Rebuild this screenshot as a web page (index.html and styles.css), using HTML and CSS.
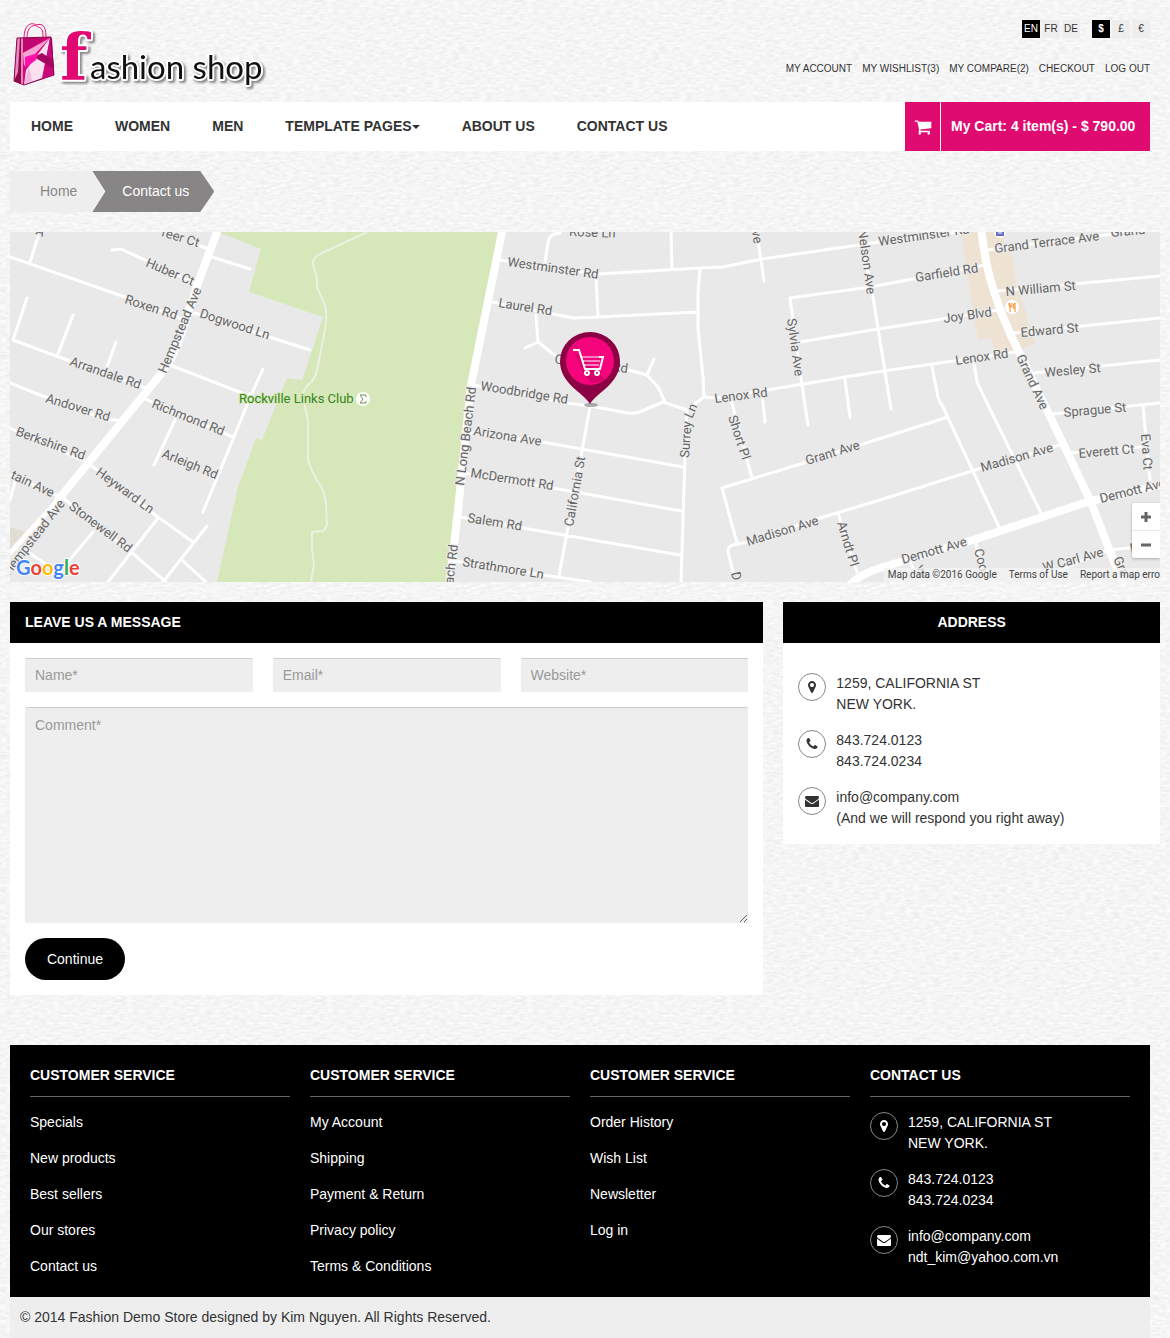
FILE: index.html
```html
<!DOCTYPE html>
<html lang="en">
<head>
<meta charset="utf-8">
<meta name="viewport" content="width=device-width, initial-scale=1">
<title>Contact us - Fashion Shop</title>
<link rel="stylesheet" href="styles.css">
</head>
<body>
<svg class="sprite" aria-hidden="true">
  <symbol id="i-cart" viewBox="0 0 1792 1792"><path d="M704 1536q0 52-38 90t-90 38-90-38-38-90 38-90 90-38 90 38 38 90zm896 0q0 52-38 90t-90 38-90-38-38-90 38-90 90-38 90 38 38 90zm128-1088v512q0 24-16.5 42.5t-40.5 21.5l-1044 122q13 60 13 70 0 16-24 64h920q26 0 45 19t19 45-19 45-45 19h-1024q-26 0-45-19t-19-45q0-11 8-31.5t16-36 21.5-40 15.5-29.5l-177-823h-204q-26 0-45-19t-19-45 19-45 45-19h256q16 0 28.5 6.5t19.5 15.5 13 24.5 8 26 5.5 29.5 4.5 26h1201q26 0 45 19t19 45z"/></symbol>
  <symbol id="i-marker" viewBox="0 0 1792 1792"><path d="M1152 640q0-106-75-181t-181-75-181 75-75 181 75 181 181 75 181-75 75-181zm256 0q0 109-33 179l-364 774q-16 33-47.500 52t-67.500 19-67.500-19-46.500-52l-365-774q-33-70-33-179 0-212 150-362t362-150 362 150 150 362z"/></symbol>
  <symbol id="i-phone" viewBox="0 0 1792 1792"><path d="M1600 1240q0 27-10 70.500t-21 68.500q-21 50-122 106-94 51-186 51-27 0-53-3.500t-57.500-12.500-47-14.500-55.500-20.500-49-18q-98-35-175-83-127-79-264-216t-216-264q-48-77-83-175-3-9-18-49t-20.500-55.500-14.500-47-12.500-57.500-3.500-53q0-92 51-186 56-101 106-122 25-11 68.500-21t70.500-10q14 0 21 3 18 6 53 76 11 19 30 54t35 63.500 31 53.500q3 4 17.500 25t21.500 35.500 7 28.500q0 20-28.500 50t-62 55-62 53-28.500 46q0 9 5 22.500t8.500 20.500 14 24 11.500 19q76 137 174 235t235 174q2 1 19 11.500t24 14 20.500 8.500 22.500 5q18 0 46-28.500t53-62 55-62 50-28.500q14 0 28.500 7t35.500 21.500 25 17.500q25 15 53.500 31t63.500 35 54 30q70 35 76 53 3 7 3 21z"/></symbol>
  <symbol id="i-mail" viewBox="0 0 1792 1792"><path d="M1792 710v794q0 66-47 113t-113 47h-1472q-66 0-113-47t-47-113v-794q44 49 101 87 362 246 497 345 57 42 92.500 65.500t94.500 48 110 24.500h2q51 0 110-24.500t94.500-48 92.500-65.500q170-123 498-345 57-39 100-87zm0-294q0 79-49 151t-122 123q-376 261-468 325-10 7-42.500 31t-54 38.500-52 32.500-57.500 27-50 9h-2q-23 0-50-9t-57.500-27-52-32.500-54-38.500-42.500-31q-91-64-262-182.500t-205-142.500q-62-42-117-115.500t-55-136.500q0-78 41.500-130t118.500-52h1472q65 0 112.500 47t47.500 113z"/></symbol>
</svg>

<header class="top">
  <a class="logo" href="#" aria-label="Fashion shop">
    <svg class="logo-art" viewBox="10 20 262 76" width="262" height="76">
      <g class="logo-bag">
        <path d="M24 39C24 21 34 23 36 25C45 22 46 30 46 38M27 38C27 25 35 24 38 27C43 28 43 33 43 38" fill="none" stroke="#e0107a" stroke-width="1"/>
        <path d="M17 38L51 37L54 75L24 85L14 81Z" fill="#d3087c"/>
        <path d="M17 38L21 38V84L14 81Z" fill="#8e0a4c"/>
        <path d="M17 38L20 38L18 72L14 81Z" fill="#e98bc0"/>
        <path d="M23 38L46 38L23 52Z" fill="#c1066d"/>
        <path d="M23 53L50 38L24 66Z" fill="#f5a3d0"/>
        <path d="M50 38L26 70L24 85L42 78Z" fill="#fbe0f0"/>
        <path d="M50 38L43 77L54 73L52 38Z" fill="#c9087a"/>
        <path d="M34 57L54 69L53 60L42 53Z" fill="#a40560"/>
        <path d="M25 57L38 53L36 60L25 68Z" fill="#ff10aa"/>
        <path d="M24 85L29 67L32 81Z" fill="#f3b5da"/>
        <path d="M22 38V84" stroke="#fff" stroke-width="1"/>
        <path d="M17 38L51 37L54 75L24 85L14 81Z" fill="none" stroke="#8a0a4c" stroke-width="1"/>
      </g>
      <g class="logo-word"><text class="logo-f" x="60" y="79">f</text><text class="logo-rest" x="90" y="79">ashion shop</text></g>
    </svg>
  </a>
  <div class="tools">
    <div class="switches">
      <ul class="switch">
        <li><a class="chip on" href="#">EN</a></li><li><a class="chip" href="#">FR</a></li><li><a class="chip" href="#">DE</a></li>
      </ul>
      <ul class="switch">
        <li><a class="chip on strong" href="#">$</a></li><li><a class="chip" href="#">£</a></li><li><a class="chip" href="#">€</a></li>
      </ul>
    </div>
    <ul class="account">
      <li><a href="#">My Account</a></li><li><a href="#">My Wishlist(3)</a></li><li><a href="#">My Compare(2)</a></li><li><a href="#">Checkout</a></li><li><a href="#">Log out</a></li>
    </ul>
  </div>
</header>

<nav class="bar">
  <ul class="menu">
    <li><a href="#">Home</a></li><li><a href="#">Women</a></li><li><a href="#">Men</a></li><li><a href="#">Template Pages<span class="caret"></span></a></li><li><a href="#">About us</a></li><li><a href="#">Contact us</a></li>
  </ul>
  <a class="cart" href="#"><span class="cart-icon"><svg width="18" height="18"><use href="#i-cart"/></svg></span><span class="cart-text">My Cart: 4 item(s) - $ 790.00</span></a>
</nav>

<ol class="crumbs">
  <li class="crumb"><a href="#">Home</a></li>
  <li class="crumb here">Contact us</li>
</ol>

<main class="main">
  <section class="map" aria-label="Map">
    <svg class="map-art" viewBox="10 232 1150 350" preserveAspectRatio="xMidYMid slice">
      <path fill="#d6e8b9" d="M219 232L261 249L249 292L322 318L301 380L287 378L275 408L262 440L256 438L238 487L217 582H445L471 385L500 232Z"/>
      <path fill="#e9e9e9" d="M249 292L323 317L302 380L287 377L262 375Z"/>
      <path fill="#eee2d3" d="M961 232L970 293L978 340L992 338L994 349L1015 352L1035 343L1023 302L1016 287L1013 258L1004 245V232Z"/>
      <path fill="#e0ddd3" d="M10 527L26 532L10 553Z"/>
      <path class="trail" d="M367 232Q352 239 318 255Q310 260 315 271Q318 277 317 287L324 303Q328 312 325 330L317 370Q315 380 307 386L303 393L305 407Q309 420 308 435V460Q309 466 318 482Q325 490 326 505L327 524Q326 530 322 531L312 532V548L314 565L311 582"/>
      <g class="road">
        <path d="M10 257L125 297L182 319L195 313L263 335L310 350M30 262L38 237M27 298L13 340L67 360L145 388M58 354L73 315M107 367L116 342M10 383L40 395L108 420H118M112 250L121 249L145 260L197 284M200 246L212 250M212 257L250 269M170 365L247 395L252 393M263 369L252 393L203 512M143 398L233 437M175 420L154 465M10 428L88 463L158 517L193 542M207 526L163 582M182 560L206 582M158 518L108 582M10 475L63 498L132 553L166 582M93 532L67 563M28 552L47 565M16 478L10 500"/>
        <path d="M500 260L598 274L700 268L723 267L762 259L879 242L960 232M545 263L548 242Q550 233 560 233M671 232L672 268M596 276L598 317M492 302L553 314L573 318L598 317L697 312M700 268L698 292V328L703 377L704 397M536 315L538 342L557 357M538 342L525 348M628 370L647 375L658 387L665 402M647 375L654 359M473 385L567 403L590 406L628 413Q635 414 642 411L663 402L687 410L704 397L715 398L767 390L870 373L953 361L1015 352M687 410L685 457L681 582M590 407L567 533L559 576M467 432L542 442L683 467M463 473L553 488L681 511M460 517L523 528L680 555M455 561L543 575L590 582M731 400L752 478M762 393L765 422M764 281L758 240M808 425L802 385L790 298L870 287L913 279L985 265M845 380L850 417M800 342L878 329L943 319L998 310M860 232L873 297L891 409"/>
        <path d="M737 543L722 488L807 462L860 445L948 417M733 572L728 552Q727 547 733 545L747 542L820 518L880 500L975 470L1060 445M838 513L857 572M932 367L937 392Q938 400 942 405L999 527M974 363L977 382L988 405L1041 513M987 250L1160 228M997 291L1160 276M1013 333L1160 318M1033 373L1160 360M1053 414L1160 403M1143 406L1150 480M1070 453L1141 447M1040 578L1108 550L1140 547M975 540L985 582M910 562L920 582"/>
      </g>
      <path class="road major" d="M217 232L198 283L182 332Q173 360 160 375L58 500"/>
      <path class="road mid" d="M58 500L10 553"/>
      <path class="road major" d="M502 232L471 385L458 510L450 582"/>
      <path class="road major" d="M981 228Q986 268 993 288Q1002 318 1017 348L1047 410L1090 500L1125 590M848 587Q858 575 880 568L973 540L1087 502L1165 484"/>
      <g class="label">
        <text transform="translate(161 236) rotate(17)">reer Ct</text>
        <text transform="translate(35 234) rotate(20)">A</text>
        <text transform="translate(145 266) rotate(23)">Huber Ct</text>
        <text transform="translate(124 303) rotate(18)">Roxen Rd</text>
        <text transform="translate(199 317) rotate(18)">Dogwood Ln</text>
        <text transform="translate(166 374) rotate(-67)">Hempstead Ave</text>
        <text transform="translate(69 365) rotate(19)">Arrandale Rd</text>
        <text transform="translate(45 402) rotate(17)">Andover Rd</text>
        <text transform="translate(15 435) rotate(20)">Berkshire Rd</text>
        <text transform="translate(10 478) rotate(25)">tain Ave</text>
        <text transform="translate(151 407) rotate(22)">Richmond Rd</text>
        <text transform="translate(161 457) rotate(22)">Arleigh Rd</text>
        <text transform="translate(95 474) rotate(36)">Heyward Ln</text>
        <text transform="translate(68 508) rotate(37)">Stonewell Rd</text>
        <text transform="translate(9 576) rotate(-52)">Hempstead Ave</text>
        <text transform="translate(507 266) rotate(8)">Westminster Rd</text>
        <text transform="translate(498 307) rotate(9)">Laurel Rd</text>
        <text transform="translate(480 390) rotate(9)">Woodbridge Rd</text>
        <text transform="translate(473 435) rotate(9)">Arizona Ave</text>
        <text transform="translate(470 477) rotate(9)">McDermott Rd</text>
        <text transform="translate(467 522) rotate(9)">Salem Rd</text>
        <text transform="translate(462 566) rotate(9)">Strathmore Ln</text>
        <text transform="translate(464 486) rotate(-83)">N Long Beach Rd</text>
        <text text-anchor="end" transform="translate(458 545) rotate(-83)">Beach Rd</text>
        <text transform="translate(573 527) rotate(-80)">California St</text>
        <text transform="translate(569 236) rotate(2)">Rose Ln</text>
        <text transform="translate(554 363) rotate(10)">C</text>
        <text transform="translate(612 371) rotate(8)">Rd</text>
        <text transform="translate(689 458) rotate(-86)">Surrey</text>
        <text transform="translate(692 419) rotate(-66)">Ln</text>
        <text transform="translate(715 403) rotate(-7)">Lenox Rd</text>
        <text transform="translate(728 417) rotate(72)">Short Pl</text>
        <text transform="translate(787 319) rotate(82)">Sylvia Ave</text>
        <text transform="translate(858 230) rotate(82)">Nelson Ave</text>
        <text text-anchor="end" transform="translate(754 244) rotate(80)">Ave</text>
        <text transform="translate(807 465) rotate(-17)">Grant Ave</text>
        <text transform="translate(748 546) rotate(-17)">Madison Ave</text>
        <text transform="translate(837 523) rotate(73)">Arndt Pl</text>
        <text transform="translate(731 573) rotate(75)">D</text>
        <text transform="translate(879 246) rotate(-8)">Westminster Rd</text>
        <text transform="translate(916 282) rotate(-9)">Garfield Rd</text>
        <text transform="translate(944 323) rotate(-8)">Joy Blvd</text>
        <text transform="translate(956 365) rotate(-8)">Lenox Rd</text>
        <text transform="translate(995 253) rotate(-7)">Grand Terrace Ave</text>
        <text transform="translate(1111 237) rotate(-5)">Grand</text>
        <text transform="translate(1006 296) rotate(-5)">N William St</text>
        <text transform="translate(1021 337) rotate(-5)">Edward St</text>
        <text transform="translate(1045 377) rotate(-5)">Wesley St</text>
        <text transform="translate(1016 357) rotate(65)">Grand Ave</text>
        <text transform="translate(1064 417) rotate(-5)">Sprague St</text>
        <text transform="translate(1079 458) rotate(-5)">Everett Ct</text>
        <text transform="translate(1141 434) rotate(86)">Eva Ct</text>
        <text transform="translate(982 472) rotate(-16)">Madison Ave</text>
        <text transform="translate(1101 503) rotate(-14)">Demott Ave</text>
        <text transform="translate(903 564) rotate(-16)">Demott Ave</text>
        <text transform="translate(974 550) rotate(75)">Coo</text>
        <text transform="translate(916 567) rotate(65)">ve</text>
        <text transform="translate(1044 572) rotate(-15)">W Carl Ave</text>
        <text transform="translate(1113 559) rotate(65)">Gra</text>
        <text transform="translate(1131 553) rotate(-12)">D</text>
      </g>
      <text class="park" x="239" y="403">Rockville Links Club</text>
      <circle cx="363" cy="399" r="7" fill="#fff"/>
      <path d="M366 397V395H360L363 399L360 403H366V401" fill="none" stroke="#6a9352" stroke-width="1"/>
      <circle cx="1012" cy="307" r="7" fill="#fff"/>
      <path d="M1009 303V305Q1009 307 1011 307Q1012 307 1012 305V303M1010 303V312M1015 312V303Q1013 304 1013 308H1015" fill="none" stroke="#f08a1d" stroke-width="1"/>
      <circle cx="1000" cy="232" r="6" fill="#fff"/><path d="M996 229H1004V236H996Z" fill="#6470c0"/><path d="M998 233H1002" stroke="#fff"/>
      <path fill="#f3f3f3" fill-opacity=".75" d="M884 568H1160V582H884Z"/>
      <ellipse cx="591" cy="405" rx="7" ry="2" fill="#777" opacity=".6"/>
      <path fill="#8b0143" d="M590 404C583 392 560 384 560 361A30 29 0 0 1 620 361C620 384 597 392 590 404Z"/>
      <circle cx="590" cy="361" r="24" fill="#f6047c"/>
      <path d="M574 351L585 376L592 383Q600 382 605 379L587 362Z" fill="#a80357" opacity=".4"/>
      <g fill="none" stroke="#fff" stroke-width="2">
        <path d="M573 350H579L585 369H600L603 357H599"/>
        <path d="M581 357H599M582 361H600M583 365H599" stroke-width="1"/>
        <circle cx="587" cy="373" r="2"/><circle cx="597" cy="373" r="2"/>
      </g>
      <text class="google" x="16" y="575"><tspan fill="#4285f4">G</tspan><tspan fill="#ea4335">o</tspan><tspan fill="#fbbc05">o</tspan><tspan fill="#4285f4">g</tspan><tspan fill="#34a853">l</tspan><tspan fill="#ea4335">e</tspan></text>
    </svg>
    <div class="map-legal"><span>Map data ©2016 Google</span><a href="#">Terms of Use</a><a href="#">Report a map erro</a></div>
    <div class="map-zoom">
      <button type="button" aria-label="Zoom in"><svg width="12" height="12"><path d="M1 6H11M6 1V11"/></svg></button>
      <button type="button" aria-label="Zoom out"><svg width="12" height="12"><path d="M1 6H11"/></svg></button>
    </div>
  </section>

  <div class="columns">
    <section class="panel">
      <h2 class="panel-head">Leave us a message</h2>
      <form class="form">
        <div class="fields">
          <input class="field" type="text" placeholder="Name*" aria-label="Name">
          <input class="field" type="email" placeholder="Email*" aria-label="Email">
          <input class="field" type="text" placeholder="Website*" aria-label="Website">
        </div>
        <textarea class="field comment" placeholder="Comment*" aria-label="Comment"></textarea>
        <button class="submit" type="submit">Continue</button>
      </form>
    </section>
    <section class="panel">
      <h2 class="panel-head center">Address</h2>
      <ul class="contact address">
        <li><span class="ring"><svg width="14" height="14"><use href="#i-marker"/></svg></span><p>1259, CALIFORNIA ST<br>NEW YORK.</p></li>
        <li><span class="ring"><svg width="14" height="14"><use href="#i-phone"/></svg></span><p>843.724.0123<br>843.724.0234</p></li>
        <li><span class="ring"><svg width="14" height="14"><use href="#i-mail"/></svg></span><p>info@company.com<br>(And we will respond you right away)</p></li>
      </ul>
    </section>
  </div>
</main>

<footer>
  <div class="foot">
    <section><h3>Customer Service</h3>
      <ul class="links"><li><a href="#">Specials</a></li><li><a href="#">New products</a></li><li><a href="#">Best sellers</a></li><li><a href="#">Our stores</a></li><li><a href="#">Contact us</a></li></ul></section>
    <section><h3>Customer Service</h3>
      <ul class="links"><li><a href="#">My Account</a></li><li><a href="#">Shipping</a></li><li><a href="#">Payment &amp; Return</a></li><li><a href="#">Privacy policy</a></li><li><a href="#">Terms &amp; Conditions</a></li></ul></section>
    <section><h3>Customer Service</h3>
      <ul class="links"><li><a href="#">Order History</a></li><li><a href="#">Wish List</a></li><li><a href="#">Newsletter</a></li><li><a href="#">Log in</a></li></ul></section>
    <section><h3>Contact us</h3>
      <ul class="contact">
        <li><span class="ring"><svg width="14" height="14"><use href="#i-marker"/></svg></span><p>1259, CALIFORNIA ST<br>NEW YORK.</p></li>
        <li><span class="ring"><svg width="14" height="14"><use href="#i-phone"/></svg></span><p>843.724.0123<br>843.724.0234</p></li>
        <li><span class="ring"><svg width="14" height="14"><use href="#i-mail"/></svg></span><p>info@company.com<br>ndt_kim@yahoo.com.vn</p></li>
      </ul></section>
  </div>
  <p class="copy">© 2014 Fashion Demo Store designed by Kim Nguyen. All Rights Reserved.</p>
</footer>
</body>
</html>
```
FILE: styles.css
```css
* { box-sizing: border-box; }

body {
  margin: 0;
  padding: 0 20px 0 10px;
  font: 14px/21px "Liberation Sans", Arial, sans-serif;
  color: #333;
  background-color: #f5f5f5;
  background-image: url("data:image/svg+xml,%3Csvg xmlns='http://www.w3.org/2000/svg' width='200' height='200'%3E%3Cfilter id='n' x='0' y='0' width='100%25' height='100%25' color-interpolation-filters='sRGB'%3E%3CfeTurbulence type='fractalNoise' baseFrequency='.15 .4' numOctaves='3' stitchTiles='stitch'/%3E%3CfeColorMatrix values='.1 0 0 0 .91 .1 0 0 0 .91 .1 0 0 0 .91 0 0 0 0 1'/%3E%3C/filter%3E%3Crect width='200' height='200' filter='url(%23n)'/%3E%3C/svg%3E");
}

ul, ol { margin: 0; padding: 0; list-style: none; }
h2, h3, p { margin: 0; font-size: 14px; }
a { color: inherit; text-decoration: none; }
svg { display: block; fill: currentColor; }
.sprite { position: absolute; width: 0; height: 0; }

/* header */
.top {
  display: flex;
  justify-content: space-between;
  padding: 20px 0 6px;
}
.logo-art { overflow: visible; }
.logo-f { font: bold 64px "DejaVu Serif", serif; fill: #e00a72; }
.logo-rest { font: 33px Lato, sans-serif; fill: #111; }
.logo-word text { paint-order: stroke; stroke: #fff; stroke-width: 4px; stroke-linejoin: round; }
.logo-word { filter: drop-shadow(2px 2px 1px #888); }
.tools { display: flex; flex-direction: column; align-items: flex-end; gap: 20px; }
.switches { display: flex; gap: 12px; }
.switch { display: flex; gap: 2px; }
.chip {
  display: block;
  width: 18px;
  background: #eee;
  font-size: 10px;
  line-height: 18px;
  text-align: center;
}
.chip.on { background: #000; color: #fff; }
.chip.strong { font-weight: bold; }
.account { display: flex; gap: 10px; font-size: 10px; text-transform: uppercase; }

/* navigation */
.bar { display: flex; justify-content: space-between; background: #fff; line-height: 49px; font-weight: bold; }
.menu { display: flex; text-transform: uppercase; }
.menu a { display: block; padding: 0 21px; }
.caret {
  display: inline-block;
  vertical-align: middle;
  border: 4px solid transparent;
  border-top-color: currentColor;
  border-bottom: 0;
}
.cart { display: flex; gap: 1px; color: #fff; }
.cart-icon { display: grid; place-items: center; width: 35px; background: #e00b71; }
.cart-text { min-width: 209px; padding: 0 10px; background: #e00b71; }

.crumbs { display: flex; margin: 20px 0; line-height: 41px; }
.crumb {
  padding: 0 27px 0 30px;
  background: #eee;
  color: #888;
  clip-path: polygon(0 0, calc(100% - 13px) 0, 100% 50%, calc(100% - 13px) 100%, 0 100%);
}
.crumb.here {
  margin-left: -12px;
  padding-right: 25px;
  background: #888586;
  color: #fff;
  clip-path: polygon(0 0, calc(100% - 14px) 0, 100% 50%, calc(100% - 14px) 100%, 0 100%, 13px 50%);
}

/* map */
.main { margin-right: -10px; }
.map { position: relative; height: 350px; overflow: hidden; background: #e9e9e9; }
.map-art { width: 100%; height: 100%; }
.road { fill: none; stroke: #fff; stroke-width: 3px; stroke-linecap: round; stroke-linejoin: round; }
.major { stroke-width: 8px; }
.mid { stroke-width: 5px; }
.trail { fill: none; stroke: #ebf0e2; stroke-width: 2px; }
.label, .park { font: 13px Roboto, sans-serif; fill: #666; stroke: #ececec; stroke-width: 2px; paint-order: stroke; }
.park { fill: #37861b; stroke: #d6e8b9; }
.google { font: bold 20px Lato, sans-serif; stroke: #fff; stroke-width: 2px; paint-order: stroke; }
.map-legal {
  position: absolute;
  right: 0;
  bottom: 0;
  display: flex;
  gap: 12px;
  font: 10px/14px Roboto, sans-serif;
  color: #444;
}
.map-zoom {
  position: absolute;
  right: 0;
  bottom: 24px;
  width: 28px;
  background: #fff;
  border-radius: 2px 0 0 2px;
  box-shadow: 0 1px 3px #0004;
}
.map-zoom button {
  display: grid;
  place-items: center;
  width: 28px;
  height: 27px;
  padding: 0;
  border: 0;
  background: none;
}
.map-zoom button + button { border-top: 1px solid #e6e6e6; height: 28px; }
.map-zoom path { stroke: #666; stroke-width: 3px; }

/* panels */
.columns { display: grid; grid-template-columns: 2fr 1fr; align-items: start; gap: 20px; margin-top: 20px; }
.panel { background: #fff; }
.panel-head { padding: 10px 15px; background: #000; color: #fff; text-transform: uppercase; }
.center { text-align: center; }
.form { display: grid; gap: 15px; padding: 15px; }
.fields { display: grid; grid-template-columns: repeat(3, 1fr); gap: 20px; }
.field {
  width: 100%;
  height: 34px;
  padding: 5px 10px 7px;
  border: 0;
  border-top: 1px solid #ccc;
  border-radius: 2px;
  background: #eee;
  font: inherit;
}
.field::placeholder { color: #999; }
.comment { display: block; height: 216px; padding-top: 7px; resize: vertical; }
.submit {
  justify-self: start;
  width: 100px;
  height: 42px;
  border: 0;
  border-radius: 21px;
  background: #000;
  color: #fff;
  font: inherit;
}
.contact { display: grid; gap: 15px; }
.contact li { display: flex; gap: 10px; }
.address { padding: 30px 15px 15px; }
.ring {
  display: grid;
  place-items: center;
  width: 28px;
  height: 28px;
  border: 1px solid #888;
  border-radius: 50%;
}

/* footer */
footer { margin-top: 50px; }
.foot {
  display: grid;
  grid-template-columns: repeat(4, 1fr);
  gap: 20px;
  padding: 20px;
  background: #000;
  color: #fff;
}
.foot h3 { margin-bottom: 15px; padding-bottom: 10px; border-bottom: 1px solid #666; text-transform: uppercase; }
.links { display: grid; gap: 15px; }
.copy { padding: 10px; background: #eee; }
```
